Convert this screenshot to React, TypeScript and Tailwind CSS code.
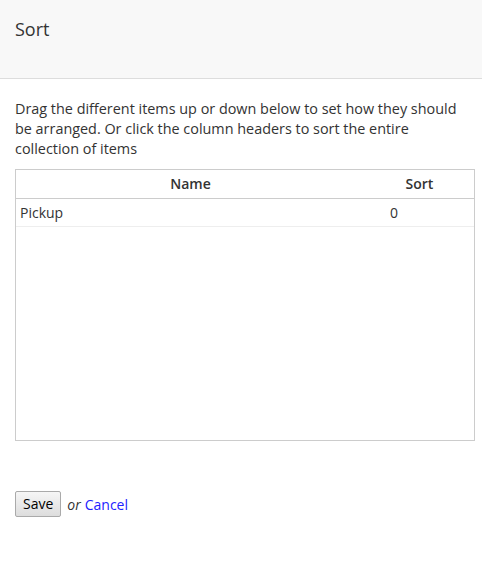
export default function App() {
  return (
    <div className="w-[482px] h-[563px] bg-white text-[#333] text-[14px]" style={{ fontFamily: '"Open Sans", sans-serif' }}>
      <div className="h-[79px] bg-[#f8f8f8] border-b border-[#dddddd] px-[15px] pt-[17px]">
        <h1 className="text-[18px] leading-[24px] font-normal text-[#333]">Sort</h1>
      </div>
      <div className="pl-[15px] pr-[8px] pt-[20px]">
        <p className="leading-[20px] text-[14.4px] w-[452px]">
          Drag the different items up or down below to set how they should be arranged. Or click the column headers to sort the entire collection of items
        </p>
        <div className="mt-[10px] h-[272px] w-[460px] border border-[#cccccc]">
          <table className="w-full border-collapse">
            <thead>
              <tr className="h-[28px] border-b border-[#cccccc]">
                <th className="w-[349px] font-semibold text-center p-0 text-[14px]">Name</th>
                <th className="font-semibold text-center p-0 text-[14px]">Sort</th>
              </tr>
            </thead>
            <tbody>
              <tr className="h-[28px] border-b border-[#eeeeee]">
                <td className="pl-[4px] p-0">Pickup</td>
                <td className="pl-[25px] p-0">0</td>
              </tr>
            </tbody>
          </table>
        </div>
        <div className="mt-[50px] flex items-center gap-[6px]">
          <button className="h-[26px] px-[7px] border border-[#aaaaaa] rounded-[2px] bg-gradient-to-b from-[#f6f6f6] to-[#dddddd] text-[14px] text-black leading-none">Save</button>
          <span className="italic text-[#333]">or</span>
          <a className="text-[#2222ff] -ml-[2px]">Cancel</a>
        </div>
      </div>
    </div>
  );
}
